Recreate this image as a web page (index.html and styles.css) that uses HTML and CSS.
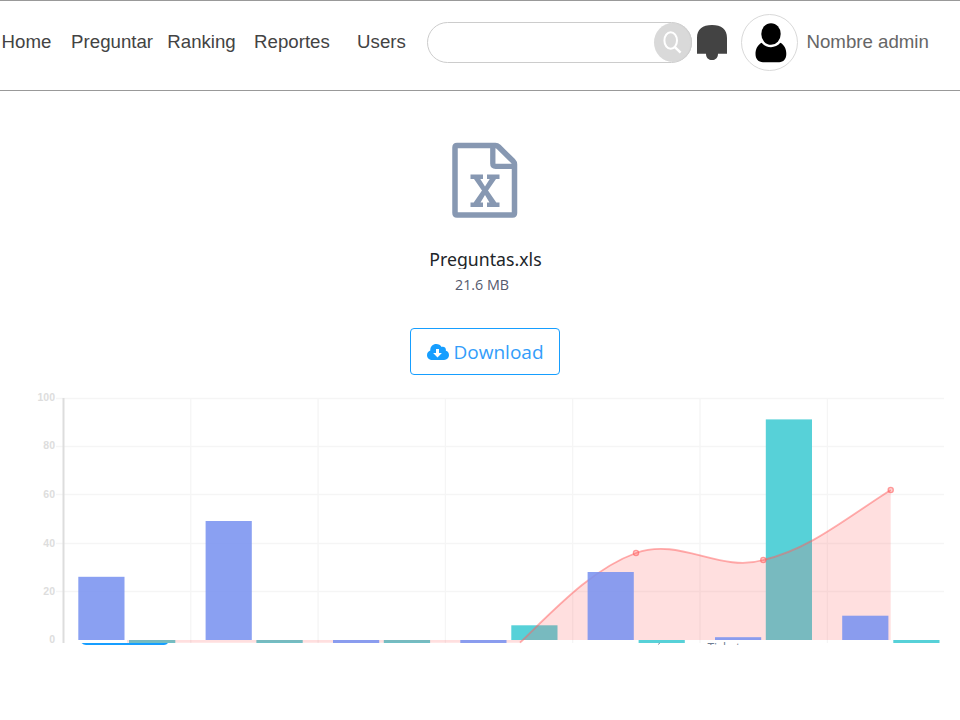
FILE: index.html
```html
<!DOCTYPE html>
<html lang="es">
<head>
<meta charset="utf-8">
<title>Reportes</title>
<link rel="stylesheet" href="styles.css">
</head>
<body>
<header class="topbar">
  <nav class="nav">
    <a>Home</a><a>Preguntar</a><a>Ranking</a><a>Reportes</a><a>Users</a>
  </nav>
  <div class="search">
    <span class="search-btn">
      <svg width="38" height="39" viewBox="0 0 38 39" fill="none" stroke="#fff"><ellipse cx="16.700" cy="17.500" rx="6.300" ry="8.300" stroke-width="2"/><path d="M20.600 23.800l6 5.800" stroke-width="2.400"/></svg>
    </span>
  </div>
  <svg class="bell" width="30" height="35" viewBox="0 0 30 35"><path d="M0 28.700V13C0 4 5.500 0 15 0s15 4 15 13v15.700h-9c0 4-2.500 6.300-6 6.300s-6-2.300-6-6.300z" fill="#434343"/></svg>
  <div class="avatar">
    <svg width="55" height="55" viewBox="0 0 55 55"><ellipse cx="29" cy="19" rx="9.700" ry="10.800"/><path d="M19.700 27.800c4.800 5.800 13.800 5.800 18.600 0 4 2 6 6.500 6 11.200 0 5-3 8.200-7 8.200H21c-4.500 0-7.500-3.200-7.500-8.200 0-4.700 2.200-9.200 6.200-11.200z"/></svg>
  </div>
  <span class="user">Nombre admin</span>
</header>
<main class="content">
  <svg class="file-icon" width="66" height="76" viewBox="0 0 66 76" fill="#8798b2">
    <path d="M5 3.500H43.500Q45.200 3.500 46.500 4.800L61 19Q62.500 20.500 62.500 22.500V71Q62.500 73 60.500 73H5Q3 73 3 71V5.500Q3 3.500 5 3.500Z" fill="none" stroke="#8798b2" stroke-width="5.500"/>
    <path d="M40.800 3.500V21.500Q40.800 24.300 43.600 24.300H62.500" fill="none" stroke="#8798b2" stroke-width="5.300"/>
    <path d="M18.500 32.500H31V37H28.300L33 44.500 37.700 37H35V32.500H47.500V37H44L36 48.600 44.300 60.500H47.500V65H35V60.500H37.500L33 53 28.500 60.500H31V65H18.500V60.500H21.700L30 48.600 22 37H18.500Z"/>
  </svg>
  <div class="file-name">Preguntas.xls</div>
  <div class="file-size">21.6 MB</div>
  <a class="download">
    <svg width="22" height="18" viewBox="0 0 22 18"><path d="M5.500 17C2.500 17 0 15 0 12.200 0 10 1.400 8.300 3.300 7.600 3 3.500 6 1 9.200 1c2.500 0 4.400 1.200 5.400 3 2.600-.7 4.700 1 4.300 3.800 1.900.5 3.100 2 3.100 4.300 0 2.900-2.100 4.900-4.900 4.900z" fill="#169eff"/><path d="M9 6h3v4h2.900L10.500 14.500 6.100 10H9z" fill="#fff"/></svg>
    <span>Download</span>
  </a>
  <svg class="chart" width="960" height="260" viewBox="0 390 960 260">
    <defs><clipPath id="labels"><rect x="640" y="642" width="120" height="3"/></clipPath></defs>
    <g class="grid">
      <path d="M56 398.500H944M56 446.500H944M56 494.500H944M56 543.500H944M56 591.500H944"/>
      <path d="M190.800 398V643M318.100 398V643M445.400 398V643M572.700 398V643M700 398V643M827.400 398V643"/>
    </g>
    <path d="M63.500 398V643" stroke="#ddd" stroke-width="2"/>
    <g class="ticks">
      <text x="55" y="401.300">100</text><text x="55" y="449.300">80</text><text x="55" y="497.500">60</text><text x="55" y="546.500">40</text><text x="55" y="594.500">20</text><text x="55" y="643">0</text>
    </g>
    <g class="teal">
      <rect x="129" y="640" width="46.300" height="3"/><rect x="256.400" y="640" width="46.300" height="3"/><rect x="383.800" y="640" width="46.300" height="3"/>
      <rect x="511.300" y="625.300" width="46.200" height="14.700"/><rect x="638.600" y="640" width="46.200" height="3"/><rect x="765.800" y="419.400" width="46.200" height="220.600"/><rect x="893.300" y="640" width="46.200" height="3"/>
    </g>
    <path class="area" d="M520 642.700C556 608 592 569 636 553C680 537 720 573 763.300 560C810 549 845 519 890.700 490V640H522.700Z"/>
    <path class="area" d="M127 640H522.700L520 642.800H127Z"/>
    <path class="line" d="M520 642.700C556 608 592 569 636 553C680 537 720 573 763.300 560C810 549 845 519 890.700 490"/>
    <g class="blue">
      <rect x="78.300" y="576.800" width="46.200" height="63.200"/><rect x="205.600" y="521" width="46.200" height="119"/><rect x="333" y="640" width="46.200" height="3"/><rect x="460.300" y="640" width="46.200" height="3"/>
      <rect x="587.600" y="572" width="46.200" height="68"/><rect x="715" y="637.200" width="46.200" height="2.800"/><rect x="842.200" y="615.700" width="46.200" height="24.300"/>
    </g>
    <g class="points"><circle cx="636" cy="553" r="2.600"/><circle cx="763.300" cy="560" r="2.600"/><circle cx="890.700" cy="490" r="2.600"/></g>
    <path d="M81.500 643H168Q166.500 644.900 164 644.900H86Q83.500 644.900 81.500 643Z" fill="#169eff"/>
    <g clip-path="url(#labels)"><text class="caption" x="707.500" y="652">Tickets</text><path d="M658 644.500l2-1.500" stroke="#8b98aa"/></g>
  </svg>
</main>
</body>
</html>
```

FILE: styles.css
```css
* { box-sizing: border-box; }
body { margin: 0; width: 960px; height: 720px; overflow: hidden; background: #fff; }
.topbar { height: 91px; border-top: 1px solid #999; border-bottom: 1px solid #999; display: flex; align-items: center; padding-bottom: 6px; font: 18.67px "Liberation Sans", Arial, sans-serif; color: #434343; }
.nav { display: grid; grid-template-columns: 69.500px 96.200px 86.800px 103px 71px; width: 427px; padding: 0 0 1px 1.600px; flex: none; }
.search { width: 265px; height: 41px; border: 1px solid #ccc; border-radius: 20.500px; display: flex; justify-content: flex-end; flex: none; }
.search-btn { width: 38px; height: 39px; margin-right: -1px; border-radius: 50%; background: #d9d9d9; box-shadow: inset -1px 0 1px #ccc; }
.search-btn svg, .avatar svg { display: block; }
.bell { margin: 0 0 0 5px; flex: none; }
.avatar { width: 57px; height: 57px; border: 1px solid #d9d9d9; border-radius: 50%; margin-left: 14px; flex: none; }
.user { margin-left: 8.500px; padding-bottom: 1px; color: #666; white-space: nowrap; }
.content { display: flex; flex-direction: column; align-items: center; padding-top: 51px; font-family: "Open Sans", "Noto Sans", sans-serif; }
.file-icon { margin-left: 10px; }
.file-name { margin: 29px 0 0 11px; height: 22px; line-height: 24px; overflow: hidden; font-family: "Noto Sans", sans-serif; font-size: 17.700px; color: #212529; white-space: nowrap; }
.file-size { margin: 6px 0 1px 4px; line-height: 19px; font-size: 14.300px; color: #555b6e; }
.download { display: flex; align-items: center; justify-content: center; gap: 5px; width: 150px; height: 47px; margin: 33px 0 0 10px; border: 1px solid #169eff; border-radius: 4px; color: #339dfa; font-size: 19px; }
.download span { padding-top: 1px; }
.chart { display: block; margin-top: 15px; flex: none; }
.grid path { stroke: #f5f5f5; stroke-width: 1.300; fill: none; }
.ticks { font: bold 10.500px "Liberation Sans", sans-serif; fill: #ddd; text-anchor: end; }
.teal { fill: #57d1d8; }
.area { fill: rgba(255, 95, 95, .2); }
.line { fill: none; stroke: rgba(255, 95, 95, .5); stroke-width: 1.800; }
.blue { fill: rgba(121, 146, 240, .875); }
.points circle { fill: rgba(255, 95, 95, .3); stroke: rgba(255, 95, 95, .6); stroke-width: 1.300; }
.caption { font-size: 12px; fill: #6f7d92; }
```
